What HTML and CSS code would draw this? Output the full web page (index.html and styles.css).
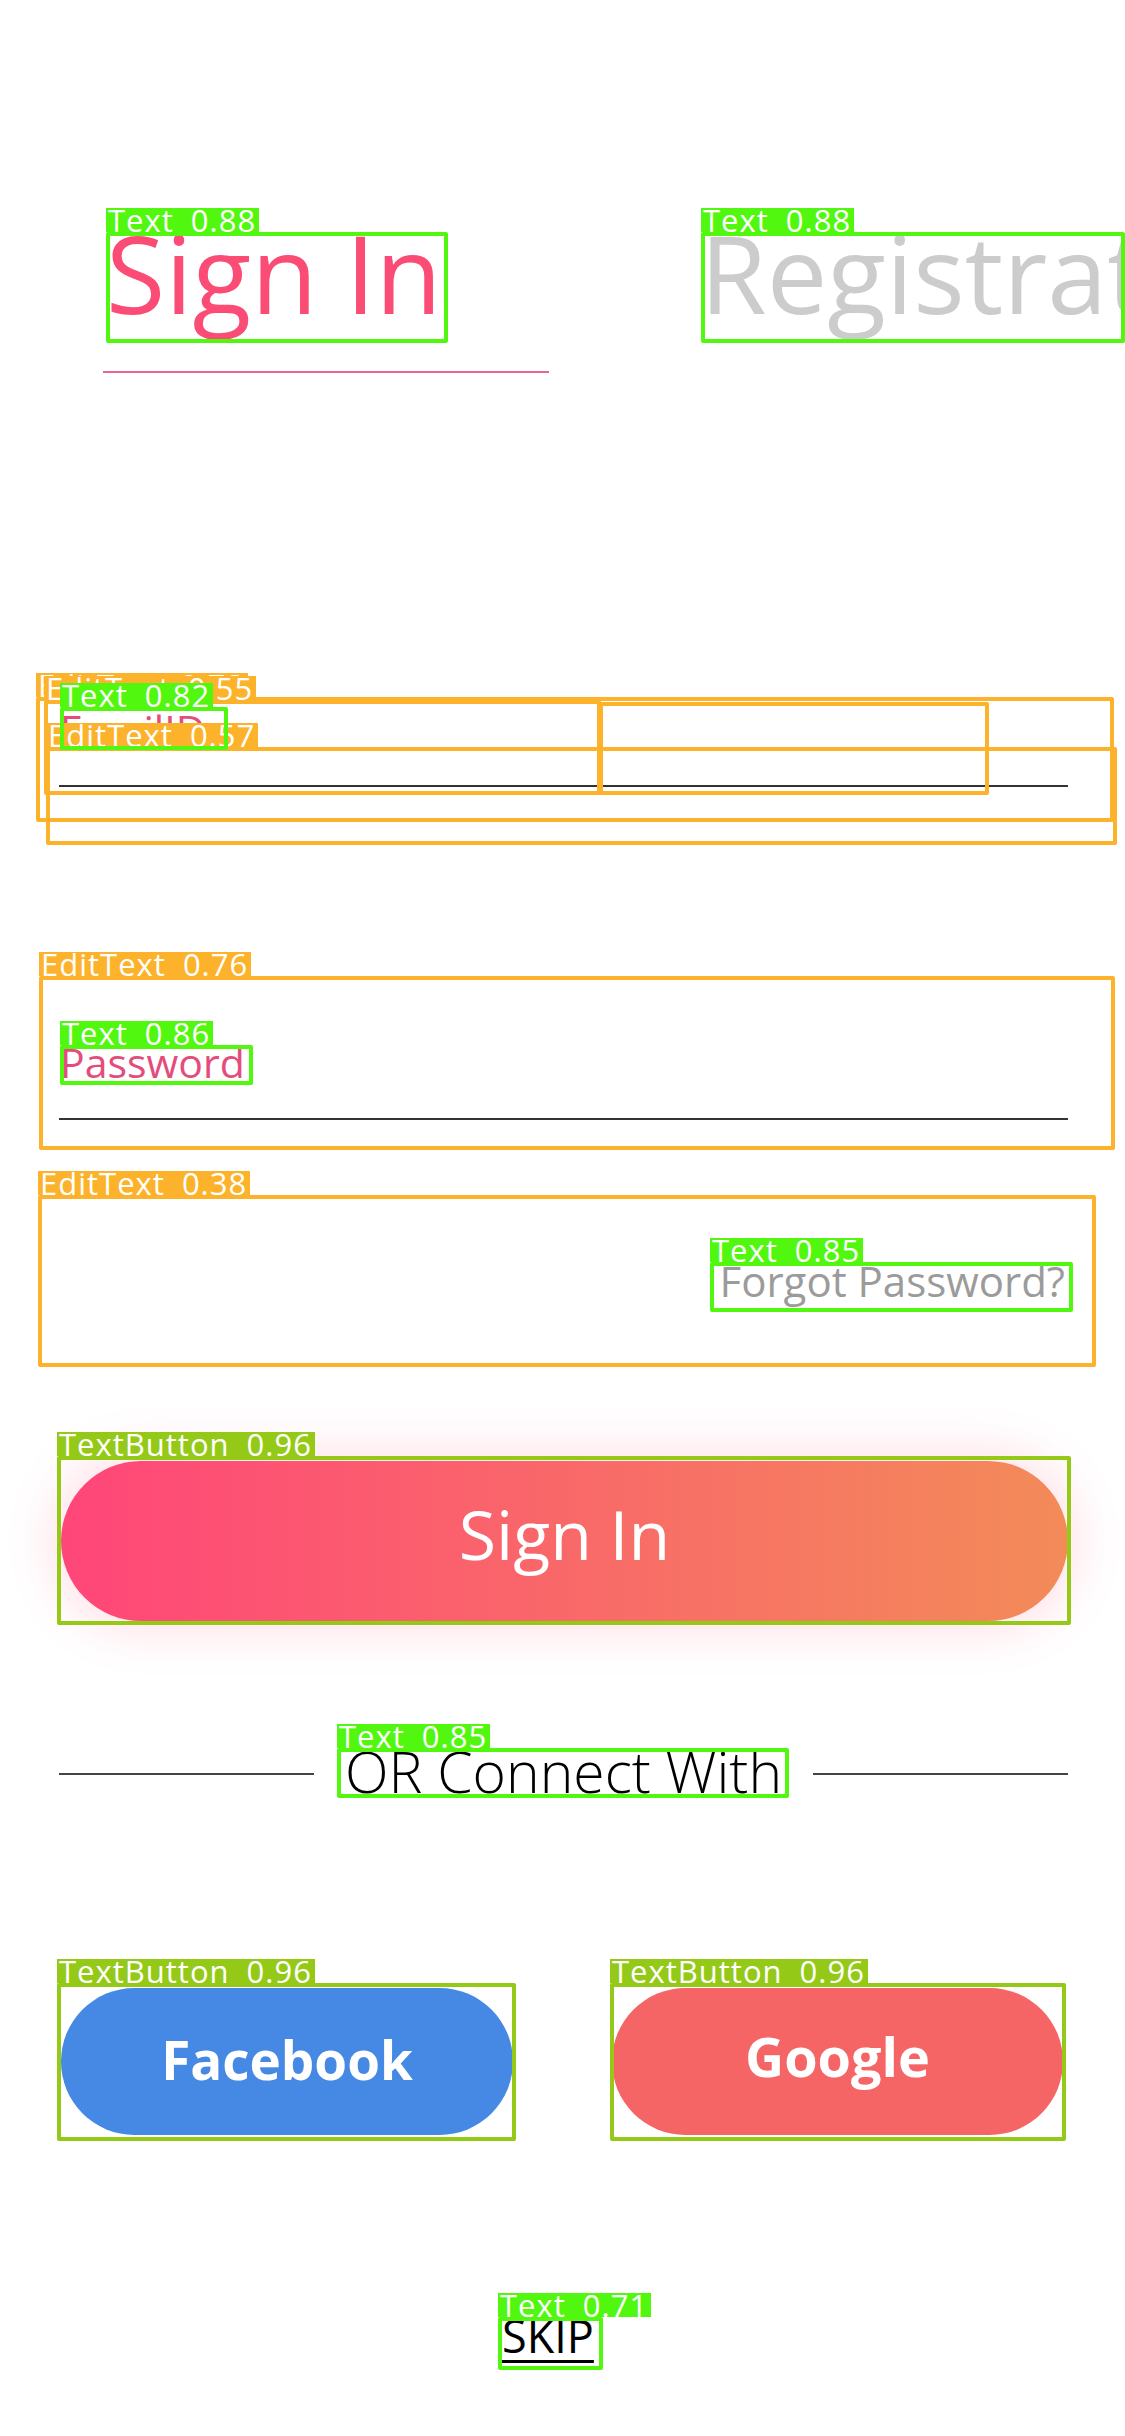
FILE: index.html
```html
<!DOCTYPE html>
<html lang="en">
<head>
<meta charset="utf-8">
<title>Sign In</title>
<link rel="stylesheet" href="styles.css">
</head>
<body>
<div class="screen">
  <div class="tabs">
    <div class="tab tab-active">Sign In</div>
    <div class="tab tab-idle">Registration</div>
  </div>
  <div class="form">
    <div class="field field-email">
      <div class="field-label">EmailID</div>
      <div class="field-line"></div>
    </div>
    <div class="field field-password">
      <div class="field-label">Password</div>
      <div class="field-line"></div>
    </div>
    <div class="forgot">Forgot Password?</div>
    <button class="btn-primary">Sign In</button>
    <div class="divider">
      <span class="divider-line"></span>
      <span class="divider-text">OR Connect With</span>
      <span class="divider-line"></span>
    </div>
    <div class="social">
      <button class="btn-social btn-fb">Facebook</button>
      <button class="btn-social btn-google">Google</button>
    </div>
    <div class="skip"><span class="skip-link">SKIP</span></div>
  </div>
</div>

<div class="detections">
  <div class="det det-text d-title-signin"><span class="det-label">Text 0.88</span></div>
  <div class="det det-text d-title-reg"><span class="det-label">Text 0.88</span></div>
  <div class="det det-edit d-edit-a"><span class="det-label">EditText 0.73</span></div>
  <div class="det det-edit d-edit-b"><span class="det-label">EditText 0.55</span></div>
  <div class="det det-edit d-edit-c"></div>
  <div class="det det-edit d-edit-d"><span class="det-label">EditText 0.57</span></div>
  <div class="det det-text d-text-email"><span class="det-label">Text 0.82</span></div>
  <div class="det det-edit d-edit-pass"><span class="det-label">EditText 0.76</span></div>
  <div class="det det-text d-text-pass"><span class="det-label">Text 0.86</span></div>
  <div class="det det-edit d-edit-forgot"><span class="det-label">EditText 0.38</span></div>
  <div class="det det-text d-text-forgot"><span class="det-label">Text 0.85</span></div>
  <div class="det det-btn d-btn-signin"><span class="det-label">TextButton 0.96</span></div>
  <div class="det det-text d-text-or"><span class="det-label">Text 0.85</span></div>
  <div class="det det-btn d-btn-fb"><span class="det-label">TextButton 0.96</span></div>
  <div class="det det-btn d-btn-google"><span class="det-label">TextButton 0.96</span></div>
  <div class="det det-text d-text-skip"><span class="det-label">Text 0.71</span></div>
</div>
</body>
</html>
```

FILE: styles.css
```css
* { box-sizing: border-box; margin: 0; padding: 0; }
html, body { width: 1125px; height: 2436px; }
body {
  background: #ffffff;
  font-family: "Open Sans", "Noto Sans", sans-serif;
  position: relative;
  overflow: hidden;
}

/* ---------- tabs ---------- */
.tabs {
  display: flex;
  padding: 208px 0 0 103px;
  white-space: nowrap;
}
.tab {
  font-size: 108px;
  line-height: 130px;
  flex-shrink: 0;
}
.tab-active {
  width: 446px;
  color: #fb4c76;
  padding-left: 3px;
  padding-bottom: 33px;
  border-bottom: 2px solid #e5678f;
}
.tab-idle {
  color: #cccccc;
  padding-left: 151px;
}

/* ---------- form ---------- */
.form { padding: 0 57px 0 59px; }
.field-label {
  font-size: 41px;
  line-height: 56px;
  color: #e44d7b;
  padding-left: 1px;
}
.field-line { height: 2px; background: #333333; }
.field-email { margin-top: 328px; }
.field-email .field-line { margin-top: 28px; }
.field-password { margin-top: 247px; }
.field-password .field-line { margin-top: 28px; }

.forgot {
  margin-top: 133px;
  font-size: 42px;
  line-height: 56px;
  color: #9b9b9b;
  text-align: right;
  padding-right: 3px;
}

.btn-primary {
  display: flex;
  align-items: center;
  justify-content: center;
  margin: 152px 0 0 2px;
  width: 1007px;
  height: 160px;
  border: none;
  border-radius: 80px;
  background: linear-gradient(90deg, #ff4679 0%, #f38b59 100%);
  color: #ffffff;
  font-family: inherit;
  font-size: 68px;
  padding-bottom: 16px;
  box-shadow: 0 0 45px 12px rgba(255, 80, 120, 0.16);
}

.divider {
  display: flex;
  align-items: center;
  gap: 31px;
  margin-top: 117px;
}
.divider-line { flex: 1; height: 2px; background: #444444; }
.divider-text {
  font-size: 57px;
  font-weight: 300;
  line-height: 66px;
  padding-bottom: 6px;
  color: #000000;
  white-space: nowrap;
}

.social {
  display: flex;
  gap: 99px;
  margin: 178px 0 0 2px;
}
.btn-social {
  width: 452px;
  height: 147px;
  border-radius: 74px;
  border: none;
  color: #ffffff;
  font-family: inherit;
  font-weight: 700;
  font-size: 53px;
  display: flex;
  align-items: center;
  justify-content: center;
}
.btn-fb { background: #4589e4; padding-bottom: 4px; }
.btn-google { background: #f66566; width: 451px; padding-bottom: 12px; font-size: 54px; }

.skip {
  margin: 176px 0 0 443px;
  font-size: 45px;
  line-height: 50px;
}
.skip-link {
  color: #000000;
  text-decoration: underline;
  text-decoration-thickness: 3px;
  text-underline-offset: 7px;
}

/* ---------- detection overlay ---------- */
.det {
  position: absolute;
  border: 4px solid;
  border-radius: 2px;
}
.det-label {
  position: absolute;
  left: -4px;
  bottom: calc(100% + 4px);
  height: 24px;
  line-height: 24px;
  padding: 0 3px 0 2px;
  font-family: "Open Sans", sans-serif;
  font-weight: 400;
  font-size: 31px;
  letter-spacing: 1px;
  word-spacing: 8px;
  color: #ffffff;
  white-space: nowrap;
}
.det-text { border-color: #52f70f; }
.det-text .det-label { background: #52f70f; }
.det-btn { border-color: #94c918; }
.det-btn .det-label { background: #94c918; }
.det-edit { border-color: #fcb22a; }
.det-edit .det-label { background: #fcb22a; }

.d-title-signin { left: 106px; top: 232px; width: 342px; height: 111px; }
.d-title-reg { left: 701px; top: 232px; width: 424px; height: 111px; }
.d-edit-a { left: 36px; top: 697px; width: 1078px; height: 125px; }
.d-edit-b { left: 44px; top: 700px; width: 557px; height: 95px; }
.d-edit-c { left: 599px; top: 702px; width: 390px; height: 93px; }
.d-edit-d { left: 46px; top: 747px; width: 1071px; height: 98px; }
.d-text-email { left: 60px; top: 707px; width: 168px; height: 43px; }
.d-edit-pass { left: 39px; top: 976px; width: 1076px; height: 174px; }
.d-text-pass { left: 60px; top: 1045px; width: 193px; height: 40px; }
.d-edit-forgot { left: 38px; top: 1195px; width: 1058px; height: 172px; }
.d-text-forgot { left: 710px; top: 1262px; width: 363px; height: 50px; }
.d-btn-signin { left: 57px; top: 1456px; width: 1014px; height: 169px; }
.d-text-or { left: 337px; top: 1748px; width: 452px; height: 50px; }
.d-btn-fb { left: 57px; top: 1983px; width: 459px; height: 158px; }
.d-btn-google { left: 610px; top: 1983px; width: 456px; height: 158px; }
.d-text-skip { left: 498px; top: 2317px; width: 105px; height: 53px; }
```
